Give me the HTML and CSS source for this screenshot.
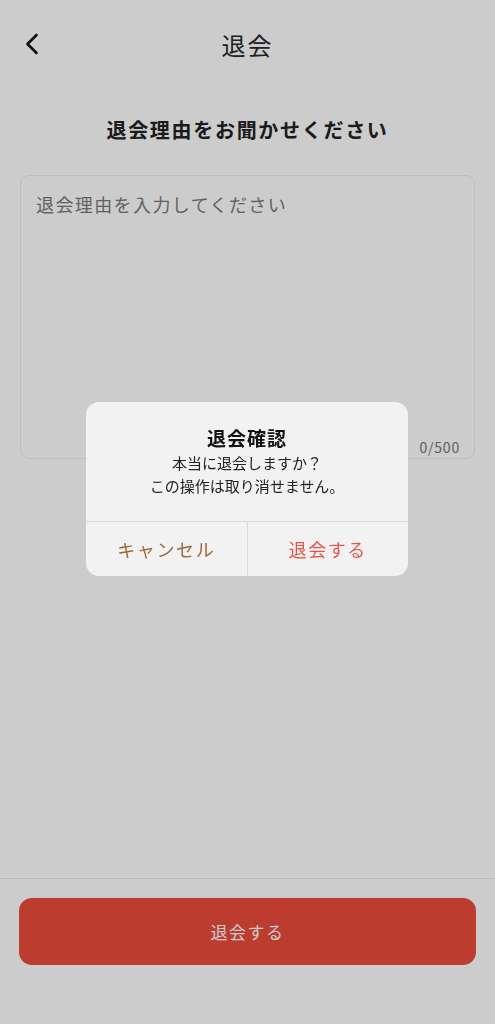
FILE: index.html
```html
<!DOCTYPE html>
<html lang="ja">

<head>
    <meta charset="UTF-8">
    <meta name="viewport" content="width=device-width, initial-scale=1.0">
    <title>退会</title>
    <link rel="stylesheet" href="styles.css">
</head>

<body>
    <div class="page">
        <header class="header">
            <a class="back" href="#">
                <svg width="20" height="22" viewBox="0 0 20 22">
                    <path d="M13.5 2 L4.5 11 L13.5 20" fill="none" stroke="#111" stroke-width="2.6" stroke-linecap="round" stroke-linejoin="round" />
                </svg>
            </a>
            <h1>退会</h1>
        </header>

        <main class="content">
            <h2 class="question">退会理由をお聞かせください</h2>
            <div class="reason-box">
                <textarea placeholder="退会理由を入力してください" maxlength="500"></textarea>
                <div class="counter">0/500</div>
            </div>
        </main>

        <footer class="footer">
            <button class="withdraw-btn">退会する</button>
        </footer>
    </div>

    <div class="overlay">
        <div class="dialog">
            <div class="dialog-body">
                <div class="dialog-title">退会確認</div>
                <p>本当に退会しますか？<br>この操作は取り消せません。</p>
            </div>
            <div class="dialog-actions">
                <button class="cancel">キャンセル</button>
                <button class="confirm">退会する</button>
            </div>
        </div>
    </div>
</body>
</html>
```

FILE: styles.css
```css
body {
    font-family: "Noto Sans CJK JP", "Noto Sans", sans-serif;
    margin: 0;
    background-color: #fff;
    color: #111;
}

.page {
    height: 1024px;
    display: flex;
    flex-direction: column;
    background: #fff;
}

.header {
    height: 88px;
    display: flex;
    align-items: center;
    justify-content: center;
    position: relative;
}

.header h1 {
    margin: 0;
    font-size: 24px;
    font-weight: 400;
    letter-spacing: 2px;
    color: #2a2a2a;
}

.back {
    position: absolute;
    left: 23px;
    top: 33px;
    display: flex;
}

.content {
    flex: 1;
    padding: 0 20px;
}

.question {
    margin: 27px 0 31px;
    text-align: center;
    font-size: 20px;
    font-weight: 700;
    letter-spacing: 1.7px;
    color: #222;
}

.reason-box {
    height: 284px;
    border: 1px solid #ededed;
    border-radius: 9px;
    position: relative;
    box-sizing: border-box;
}

.reason-box textarea {
    width: 100%;
    height: 240px;
    box-sizing: border-box;
    border: none;
    background: transparent;
    resize: none;
    padding: 15px 15px;
    font-family: inherit;
    font-size: 18px;
    letter-spacing: 1.4px;
    outline: none;
}

.reason-box textarea::placeholder {
    color: #7a7a7a;
}

.counter {
    position: absolute;
    right: 14px;
    bottom: 1px;
    font-size: 14px;
    color: #777;
    letter-spacing: 0.8px;
}

.footer {
    border-top: 1px solid #ebebeb;
    padding: 19px 19px 59px;
}

.withdraw-btn {
    width: 100%;
    height: 67px;
    border: none;
    border-radius: 13px;
    background-color: #eb4b3b;
    color: #fff;
    font-family: inherit;
    font-size: 17px;
    letter-spacing: 1.5px;
}

.overlay {
    position: fixed;
    inset: 0;
    background: rgba(0, 0, 0, 0.2);
}

.dialog {
    position: absolute;
    left: 86px;
    top: 402px;
    width: 322px;
    background: #f2f2f2;
    border-radius: 13px;
    overflow: hidden;
    text-align: center;
}

.dialog-body {
    padding: 22px 16px 24px;
    border-bottom: 1px solid #dcdcdc;
}

.dialog-title {
    font-size: 19px;
    font-weight: 700;
    letter-spacing: 1px;
    color: #111;
    line-height: 27px;
}

.dialog-body p {
    margin: 0;
    font-size: 15px;
    line-height: 23px;
    color: #222;
}

.dialog-actions {
    display: flex;
    height: 54px;
}

.dialog-actions button {
    flex: 1;
    border: none;
    background: transparent;
    font-family: inherit;
    font-size: 18px;
    letter-spacing: 1.6px;
}

.cancel {
    color: #9a6a3c;
    border-right: 1px solid #dcdcdc !important;
}

.confirm {
    color: #e0564c;
}
```
